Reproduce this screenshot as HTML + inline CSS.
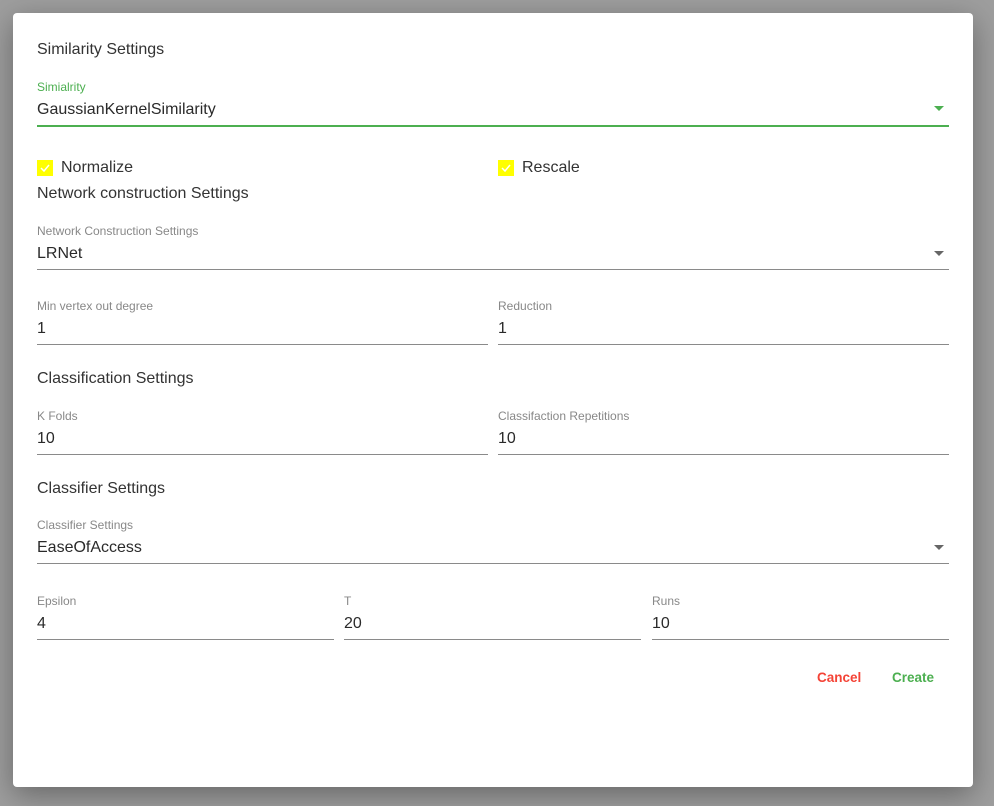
<!DOCTYPE html><html><head><style>
body{margin:0;width:994px;height:806px;background:#9e9e9e;font-family:"Liberation Sans",sans-serif;position:relative;overflow:hidden}
.d{position:absolute;left:13px;top:13px;width:960px;height:774px;background:#fff;border-radius:4px;box-shadow:0 8px 30px rgba(0,0,0,.35)}
.a{position:absolute;white-space:nowrap}
.h{font-size:16px;color:#333}
.l{font-size:12px;color:#888}
.v{font-size:16px;color:#2a2a2a}
.u{position:absolute;height:1px;background:#8a8a8a}
.arr{position:absolute;width:0;height:0;border-left:5px solid transparent;border-right:5px solid transparent;border-top:5px solid #666}
.cb{position:absolute;width:16px;height:16px;background:#ffff00}
.cb svg{position:absolute;left:2px;top:2px}
</style></head><body>
<div class="d"></div>
<div class="a h" style="left:37px;top:41px">Similarity Settings</div>
<div class="a l" style="left:37px;top:80px;color:#4caf50">Simialrity</div>
<div class="a v" style="left:37px;top:101px">GaussianKernelSimilarity</div>
<div class="u" style="left:37px;top:125px;width:912px;height:2px;background:#4caf50"></div>
<div class="arr" style="left:934px;top:106px;border-top-color:#4caf50"></div>
<div class="cb" style="left:37px;top:160px"><svg width="12" height="12"><path d="M2 6l3 3 5-6" stroke="#fff" stroke-width="1.5" fill="none"/></svg></div>
<div class="a v" style="left:61px;top:159px;color:#333">Normalize</div>
<div class="cb" style="left:498px;top:160px"><svg width="12" height="12"><path d="M2 6l3 3 5-6" stroke="#fff" stroke-width="1.5" fill="none"/></svg></div>
<div class="a v" style="left:522px;top:159px;color:#333">Rescale</div>
<div class="a h" style="left:37px;top:185px">Network construction Settings</div>
<div class="a l" style="left:37px;top:224px">Network Construction Settings</div>
<div class="a v" style="left:37px;top:245px">LRNet</div>
<div class="u" style="left:37px;top:269px;width:912px"></div>
<div class="arr" style="left:934px;top:251px"></div>
<div class="a l" style="left:37px;top:299px">Min vertex out degree</div>
<div class="a v" style="left:37px;top:320px">1</div>
<div class="u" style="left:37px;top:344px;width:451px"></div>
<div class="a l" style="left:498px;top:299px">Reduction</div>
<div class="a v" style="left:498px;top:320px">1</div>
<div class="u" style="left:498px;top:344px;width:451px"></div>
<div class="a h" style="left:37px;top:370px">Classification Settings</div>
<div class="a l" style="left:37px;top:409px">K Folds</div>
<div class="a v" style="left:37px;top:430px">10</div>
<div class="u" style="left:37px;top:454px;width:451px"></div>
<div class="a l" style="left:498px;top:409px">Classifaction Repetitions</div>
<div class="a v" style="left:498px;top:430px">10</div>
<div class="u" style="left:498px;top:454px;width:451px"></div>
<div class="a h" style="left:37px;top:480px">Classifier Settings</div>
<div class="a l" style="left:37px;top:518px">Classifier Settings</div>
<div class="a v" style="left:37px;top:539px">EaseOfAccess</div>
<div class="u" style="left:37px;top:563px;width:912px"></div>
<div class="arr" style="left:934px;top:545px"></div>
<div class="a l" style="left:37px;top:594px">Epsilon</div>
<div class="a v" style="left:37px;top:615px">4</div>
<div class="u" style="left:37px;top:639px;width:297px"></div>
<div class="a l" style="left:344px;top:594px">T</div>
<div class="a v" style="left:344px;top:615px">20</div>
<div class="u" style="left:344px;top:639px;width:297px"></div>
<div class="a l" style="left:652px;top:594px">Runs</div>
<div class="a v" style="left:652px;top:615px">10</div>
<div class="u" style="left:652px;top:639px;width:297px"></div>
<div class="a" style="left:817px;top:670px;font-size:13.5px;font-weight:bold;color:#f44336">Cancel</div>
<div class="a" style="left:892px;top:670px;font-size:13.5px;font-weight:bold;color:#4caf50">Create</div>
</body></html>
